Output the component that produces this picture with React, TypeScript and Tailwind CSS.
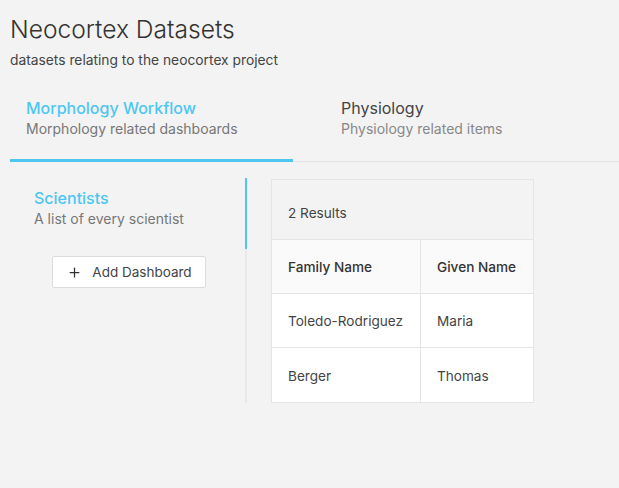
import { Plus } from "lucide-react";

const rows = [
  { family: "Toledo-Rodriguez", given: "Maria" },
  { family: "Berger", given: "Thomas" },
];

export default function App() {
  return (
    <div className="min-h-[488px] w-[619px] bg-[#f3f3f3] font-['Inter',sans-serif] text-[#444] overflow-hidden">
      <div className="px-[10px] pt-[14px]">
        <h1 className="text-[24.6px] leading-[30px] font-light text-[#333]">Neocortex Datasets</h1>
        <p className="mt-[7px] text-[13.8px] leading-[18px] text-[#444]">datasets relating to the neocortex project</p>
      </div>

      <div className="mt-[28px] ml-[10px] flex border-b border-[#e3e3e3]">
        <div className="w-[283px] px-4 pb-[20px] border-b-[3px] border-[#4dc7f2] -mb-px">
          <div className="text-[16px] leading-[22px] font-medium text-[#4dc7f2]">Morphology Workflow</div>
          <div className="text-[14px] leading-[20px] text-[#777]">Morphology related dashboards</div>
        </div>
        <div className="pl-[48px]">
          <div className="text-[16px] leading-[22px] font-normal text-[#444]">Physiology</div>
          <div className="text-[14px] leading-[20px] text-[#888]">Physiology related items</div>
        </div>
      </div>

      <div className="ml-[10px] mt-[16px] flex gap-6">
        <div className="w-[237px] border-r-2 border-[#e8e8e8] relative">
          <div className="absolute right-[-2px] top-0 h-[71px] w-[2px] bg-[#4dc7f2]" />
          <div className="px-6 pt-[9px] h-[78px]">
            <div className="text-[16px] leading-[22px] font-medium text-[#4dc7f2]">Scientists</div>
            <div className="text-[14px] leading-[20px] text-[#777]">A list of every scientist</div>
          </div>
          <div className="flex justify-center pl-[2px]">
            <button className="h-[32px] w-[154px] flex items-center justify-center gap-[10px] pl-[2px] bg-white border border-[#dcdcdc] rounded-[2px] text-[13.5px] text-[#444]">
              <Plus size={15} strokeWidth={2} className="text-[#333]" />
              Add Dashboard
            </button>
          </div>
          <div className="h-[114px]" />
        </div>

        <div className="mt-[1px] w-[263px] self-start border border-[#e5e5e5] text-[13.6px]">
          <div className="h-[60px] flex items-center px-4 pt-[8px] bg-[#f3f3f3] border-b border-[#e5e5e5] text-[#444]">2 Results</div>
          <div className="grid grid-cols-[149px_1fr]">
            <div className="h-[54px] flex items-center px-4 pt-[2px] bg-[#fafafa] border-r border-b border-[#e5e5e5] font-medium text-[#333]">Family Name</div>
            <div className="h-[54px] flex items-center px-4 pt-[2px] bg-[#fafafa] border-b border-[#e5e5e5] font-medium text-[#333]">Given Name</div>
            {rows.map((r, i) => (
              <>
                <div key={r.family} className={`h-[54px] flex items-center px-4 pt-[2px] bg-white border-r border-[#e5e5e5] ${i < rows.length - 1 ? "border-b" : ""}`}>{r.family}</div>
                <div key={r.given} className={`h-[54px] flex items-center px-4 pt-[2px] bg-white border-[#e5e5e5] ${i < rows.length - 1 ? "border-b" : ""}`}>{r.given}</div>
              </>
            ))}
          </div>
        </div>
      </div>
    </div>
  );
}
